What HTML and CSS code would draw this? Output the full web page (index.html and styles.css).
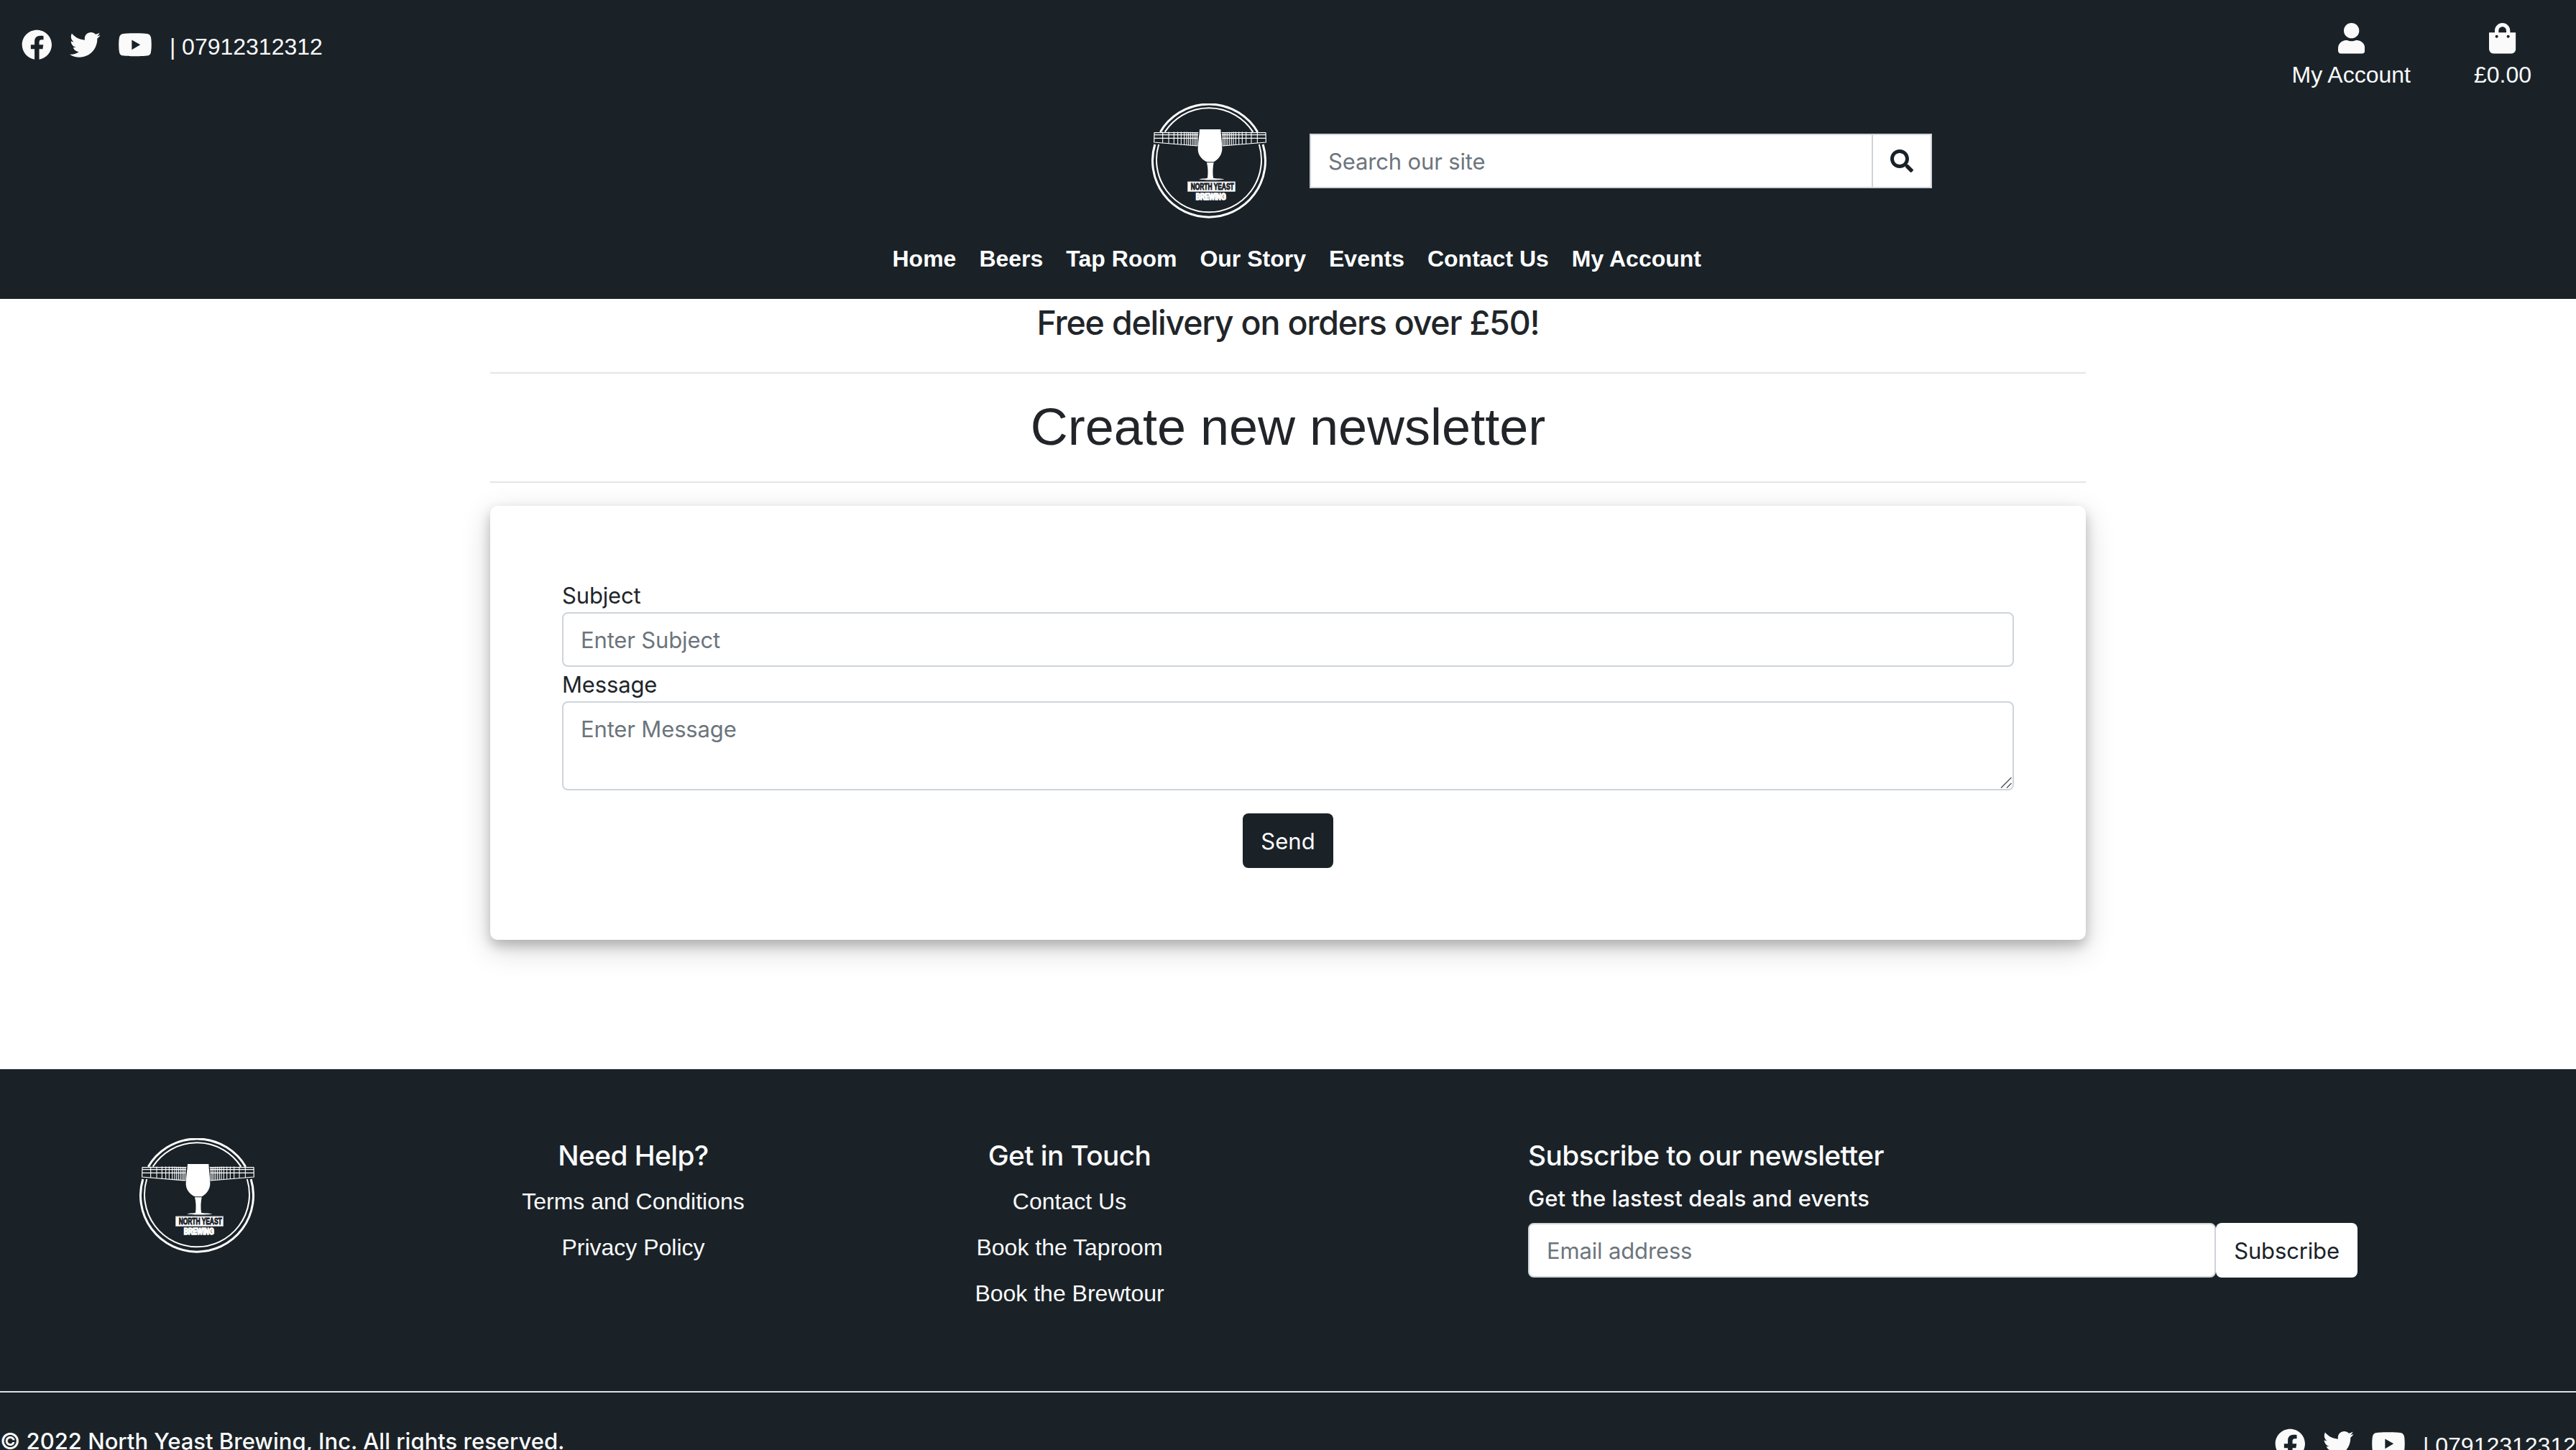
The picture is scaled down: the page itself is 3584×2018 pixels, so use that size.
FILE: index.html
```html
<!DOCTYPE html>
<html lang="en">
<head>
<meta charset="utf-8">
<title>North Yeast Brewing</title>
<link rel="stylesheet" href="styles.css">
</head>
<body>
<svg class="sprite" aria-hidden="true">
  <symbol id="facebook" viewBox="0 0 512 512"><path d="M504 256C504 119 393 8 256 8S8 119 8 256c0 123.78 90.69 226.38 209.25 245V327.69h-63V256h63v-54.64c0-62.15 37-96.48 93.67-96.48 27.14 0 55.52 4.84 55.52 4.84v61h-31.28c-30.8 0-40.41 19.12-40.41 38.73V256h68.78l-11 71.69h-57.78V501C413.31 482.38 504 379.78 504 256z"/></symbol>
  <symbol id="twitter" viewBox="0 0 512 512"><path d="M459.37 151.716c.325 4.548.325 9.097.325 13.645 0 138.72-105.583 298.558-298.558 298.558-59.452 0-114.68-17.219-161.137-47.106 8.447.974 16.568 1.299 25.34 1.299 49.055 0 94.213-16.568 130.274-44.832-46.132-.975-84.792-31.188-98.112-72.772 6.498.974 12.995 1.624 19.818 1.624 9.421 0 18.843-1.3 27.614-3.573-48.081-9.747-84.143-51.98-84.143-102.985v-1.299c13.969 7.797 30.214 12.67 47.431 13.319-28.264-18.843-46.781-51.005-46.781-87.391 0-19.492 5.197-37.36 14.294-52.954 51.655 63.675 129.3 105.258 216.365 109.807-1.624-7.797-2.599-15.918-2.599-24.04 0-57.828 46.782-104.934 104.934-104.934 30.213 0 57.502 12.67 76.67 33.137 23.715-4.548 46.456-13.32 66.599-25.34-7.798 24.366-24.366 44.833-46.132 57.827 21.117-2.273 41.584-8.122 60.426-16.243-14.292 20.791-32.161 39.308-52.628 54.253z"/></symbol>
  <symbol id="youtube" viewBox="0 0 576 512"><path d="M549.655 124.083c-6.281-23.65-24.787-42.276-48.284-48.597C458.781 64 288 64 288 64S117.22 64 74.629 75.486c-23.497 6.322-42.003 24.947-48.284 48.597-11.412 42.867-11.412 132.305-11.412 132.305s0 89.438 11.412 132.305c6.281 23.65 24.787 41.5 48.284 47.821C117.22 448 288 448 288 448s170.78 0 213.371-11.486c23.497-6.321 42.003-24.171 48.284-47.821 11.412-42.867 11.412-132.305 11.412-132.305s0-89.438-11.412-132.305zm-317.51 213.508V175.185l142.739 81.205-142.739 81.201z"/></symbol>
  <symbol id="user" viewBox="0 0 448 512"><path d="M224 256c70.7 0 128-57.3 128-128S294.7 0 224 0 96 57.3 96 128s57.3 128 128 128zm89.6 32h-16.7c-22.2 10.2-46.9 16-72.9 16s-50.6-5.8-72.9-16h-16.7C60.2 288 0 348.2 0 422.4V464c0 26.5 21.5 48 48 48h352c26.5 0 48-21.5 48-48v-41.6c0-74.2-60.2-134.4-134.4-134.4z"/></symbol>
  <symbol id="bag" viewBox="0 0 448 512"><path d="M352 160v-32C352 57.42 294.579 0 224 0 153.42 0 96 57.42 96 128v32H0v272c0 44.183 35.817 80 80 80h288c44.183 0 80-35.817 80-80V160h-96zm-192-32c0-35.29 28.71-64 64-64s64 28.71 64 64v32H160v-32zm160 120c-13.255 0-24-10.745-24-24s10.745-24 24-24 24 10.745 24 24-10.745 24-24 24zm-192 0c-13.255 0-24-10.745-24-24s10.745-24 24-24 24 10.745 24 24-10.745 24-24 24z"/></symbol>
  <symbol id="search" viewBox="0 0 512 512"><path d="M505 442.7L405.3 343c-4.5-4.5-10.6-7-17-7H372c27.6-35.3 44-79.7 44-128C416 93.1 322.9 0 208 0S0 93.1 0 208s93.1 208 208 208c48.3 0 92.7-16.4 128-44v16.3c0 6.4 2.5 12.5 7 17l99.7 99.7c9.4 9.4 24.6 9.4 33.9 0l28.3-28.3c9.4-9.4 9.4-24.6.1-34zM208 336c-70.7 0-128-57.2-128-128 0-70.7 57.2-128 128-128 70.7 0 128 57.2 128 128 0 70.7-57.2 128-128 128z"/></symbol>
  <symbol id="wing" viewBox="0 0 196 64">
    <path fill="none" stroke="#fff" stroke-width="3.6" d="M3 4H187M3 13H186M3 27H184M3 3L2 44L183 59"/>
    <path fill="none" stroke="#fff" stroke-width="3.2" d="M38 0V47M63 0V49M85 0V51M101 0V53M115 0V54M128 0V55M138 0V56M146 1V57M154 1V57M162 1V58M169 2V58M176 2V59M182 2V60"/>
  </symbol>
  <symbol id="logo" viewBox="0 0 480 480">
    <g fill="none" stroke="#fff">
      <path stroke-width="9" d="M37 119A235.500 235.500 0 0 1 443 119M14.500 171A235.500 235.500 0 1 0 465.500 171"/>
      <path stroke-width="6" d="M56 119A219 219 0 0 1 424 119M30.500 171A219 219 0 1 0 449.500 171"/>
    </g>
    <use href="#wing" x="9" y="118" width="196" height="64"/>
    <use href="#wing" x="9" y="118" width="196" height="64" transform="matrix(-1 0 0 1 489 0)"/>
    <path fill="#fff" d="M201 108H289C290 135 296 165 295 192C294 220 270 240 260 244H232C218 238 196 222 194 194C193 165 200 135 201 108Z"/>
    <path fill="#fff" d="M231 247H260C256 265 255 290 258 311C262 314 303 313 303 316C303 321 200 321 200 316C200 313 231 314 234 311C237 290 236 265 231 247Z"/>
    <rect x="152" y="327" width="197" height="40" fill="#fff" stroke="#c9cbcd" stroke-width="3"/>
    <text class="logo-name" x="164" y="361" textLength="180" lengthAdjust="spacingAndGlyphs">NORTH YEAST</text>
    <text class="logo-sub" x="185" y="403" textLength="126" lengthAdjust="spacingAndGlyphs">BREWING</text>
  </symbol>
</svg>

<header class="header">
  <div class="topbar">
    <div class="social">
      <svg class="icon"><use href="#facebook"/></svg>
      <svg class="icon"><use href="#twitter"/></svg>
      <svg class="icon icon-wide"><use href="#youtube"/></svg>
      <span class="phone">| 07912312312</span>
    </div>
    <div class="account-links">
      <a class="account-link"><svg class="icon icon-slim"><use href="#user"/></svg><span>My Account</span></a>
      <a class="account-link"><svg class="icon icon-slim"><use href="#bag"/></svg><span>£0.00</span></a>
    </div>
  </div>
  <div class="brand-row">
    <svg class="logo"><use href="#logo"/></svg>
    <form class="search">
      <input class="search-input" type="text" placeholder="Search our site">
      <button class="search-button" type="button"><svg class="search-icon"><use href="#search"/></svg></button>
    </form>
  </div>
  <nav class="nav">
    <a>Home</a><a>Beers</a><a>Tap Room</a><a>Our Story</a><a>Events</a><a>Contact Us</a><a>My Account</a>
  </nav>
</header>

<main class="main">
  <h4 class="delivery">Free delivery on orders over £50!</h4>
  <hr class="rule">
  <h2 class="title">Create new newsletter</h2>
  <hr class="rule">
  <form class="card">
    <label class="label">Subject</label>
    <input class="field" type="text" placeholder="Enter Subject">
    <label class="label">Message</label>
    <div class="message">
      <textarea class="field field-area" placeholder="Enter Message"></textarea>
      <svg class="grip" viewBox="0 0 16 16"><path d="M1 15.500L15.500 1M9 15.500L15.500 9"/></svg>
    </div>
    <button class="send" type="button">Send</button>
  </form>
</main>

<footer class="footer">
  <div class="footer-grid">
    <svg class="logo footer-logo"><use href="#logo"/></svg>
    <div class="footer-col">
      <h5 class="heading">Need Help?</h5>
      <a>Terms and Conditions</a><a>Privacy Policy</a>
    </div>
    <div class="footer-col">
      <h5 class="heading heading-tight">Get in Touch</h5>
      <a>Contact Us</a><a>Book the Taproom</a><a>Book the Brewtour</a>
    </div>
    <div class="newsletter">
      <h5 class="heading">Subscribe to our newsletter</h5>
      <p class="subheading">Get the lastest deals and events</p>
      <form class="subscribe">
        <input class="field email" type="email" placeholder="Email address">
        <button class="subscribe-button" type="button">Subscribe</button>
      </form>
    </div>
  </div>
  <div class="footer-bottom">
    <p class="copyright">© 2022 North Yeast Brewing, Inc. All rights reserved.</p>
    <div class="social">
      <svg class="icon"><use href="#facebook"/></svg>
      <svg class="icon"><use href="#twitter"/></svg>
      <svg class="icon icon-wide"><use href="#youtube"/></svg>
      <span class="phone">| 07912312312</span>
    </div>
  </div>
</footer>
</body>
</html>
```
FILE: styles.css
```css
*, *::before, *::after { box-sizing: border-box; }

body {
  margin: 0;
  height: 2018px;
  overflow: hidden;
  background: #fff;
  color: #212529;
  font: 400 31px/48px Inter, sans-serif;
}

h2, h4, h5, p { margin: 0; }
a, span, h2, h4, h5, p { white-space: nowrap; }
input, textarea, button { font: inherit; margin: 0; }

.sprite { position: absolute; width: 0; height: 0; }
.icon { width: 42.67px; height: 42.67px; fill: #fafafa; flex: none; }
.icon-wide { width: 48px; }
.icon-slim { width: 37.33px; }

/* Header */
.header {
  height: 416px;
  background: #1a2228;
  color: #fafafa;
  font: 400 32px/48px "Liberation Sans", Arial, sans-serif;
}
.topbar {
  display: flex;
  justify-content: space-between;
  align-items: flex-start;
  height: 144px;
  padding: 32px 62px 0 30px;
}
.social {
  display: flex;
  align-items: center;
  gap: 24.200px;
  padding-top: 3px;
  font: 400 32px/48px "Liberation Sans", Arial, sans-serif;
}
.phone { padding-top: 6px; }
.account-links { display: flex; gap: 88px; }
.account-link { display: flex; flex-direction: column; align-items: center; gap: 5px; }

.brand-row { display: flex; align-items: center; gap: 60px; margin-left: 1602px; }
.logo { width: 160px; height: 160px; flex: none; }
.logo-name, .logo-sub { font: 700 38px "Liberation Sans", Arial, sans-serif; }
.logo-name { fill: #1a2228; stroke: #1a2228; stroke-width: 3; }
.logo-sub { fill: #fff; stroke: #fff; stroke-width: 5; }

.search { display: flex; }
.search-input, .search-button { height: 76px; border: 2px solid #ced4da; background: #fff; font: 400 31px/48px Inter, sans-serif; }
.search-input { width: 784px; padding: 12px 24px; letter-spacing: -.15px; }
.search-button { width: 84px; margin-left: -2px; padding: 0; display: flex; align-items: center; justify-content: center; }
.search-icon { width: 32px; height: 32px; fill: #1a2228; }

.nav { display: flex; gap: 32px; margin: 32px 0 0 1241.500px; color: #fff; font-weight: 700; }

::placeholder { color: #6c757d; opacity: 1; }

/* Main column */
.main { width: 2220px; height: 1072px; margin: 0 auto; padding-top: 4px; }
.delivery { height: 66px; font-size: 46.500px; font-weight: 500; line-height: 58px; letter-spacing: -1.200px; text-align: center; }
.rule { height: 2px; margin: 32px 0; border: 0; background: #e5e5e5; }
.title { height: 86px; font: 400 72px/84px "Liberation Sans", Arial, sans-serif; text-align: center; }

.card {
  display: flex;
  flex-direction: column;
  height: 604px;
  padding: 100px;
  border-radius: 10px;
  background: #fff;
  box-shadow: 0 8px 16px rgba(0, 0, 0, .2), 0 12px 40px rgba(0, 0, 0, .19);
}
.label { height: 48px; padding-top: 1px; letter-spacing: -.15px; }
.field {
  display: block;
  width: 100%;
  height: 76px;
  padding: 12px 24px;
  border: 2px solid #ced4da;
  border-radius: 8px;
  background: #fff;
  letter-spacing: -.15px;
}
.message { position: relative; }
.field-area { height: 124px; padding-top: 13px; resize: none; overflow: hidden; }
.grip { position: absolute; right: 3px; bottom: 3px; width: 16px; height: 16px; fill: none; stroke: #555; stroke-width: 1.500; }
.send {
  align-self: center;
  width: 126px;
  height: 76px;
  margin-top: 32px;
  padding: 2px 0 0;
  border: 0;
  border-radius: 8px;
  background: #1a2228;
  color: #fff;
}

/* Footer */
.footer { height: 530px; padding-top: 96px; background: #1a2228; color: #fafafa; }
.footer-grid {
  display: grid;
  grid-template-columns: 582px 598px 616px 1fr;
  height: 352px;
}
.footer-logo { margin-left: 194px; }
.footer-col { display: flex; flex-direction: column; align-items: center; }
.footer-col a { font: 400 32px/48px "Liberation Sans", Arial, sans-serif; margin-bottom: 16px; }
.heading { height: 64px; font-size: 38.800px; font-weight: 500; line-height: 48px; letter-spacing: -.58px; }
.newsletter { margin-left: 330px; }
.newsletter .heading { height: 60px; }
.subheading { height: 58px; font-weight: 500; letter-spacing: .08px; }
.subscribe { display: flex; }
.email { width: 957px; }
.subscribe-button { width: 197px; height: 76px; padding: 2px 0 0; border: 0; border-radius: 8px; background: #fff; color: #1a2228; letter-spacing: -.15px; }
.footer-bottom {
  display: flex;
  justify-content: space-between;
  align-items: flex-start;
  height: 82px;
  padding-top: 41px;
  border-top: 2px solid #dee2e6;
}
.copyright { padding-top: 3px; font-weight: 500; }
```
